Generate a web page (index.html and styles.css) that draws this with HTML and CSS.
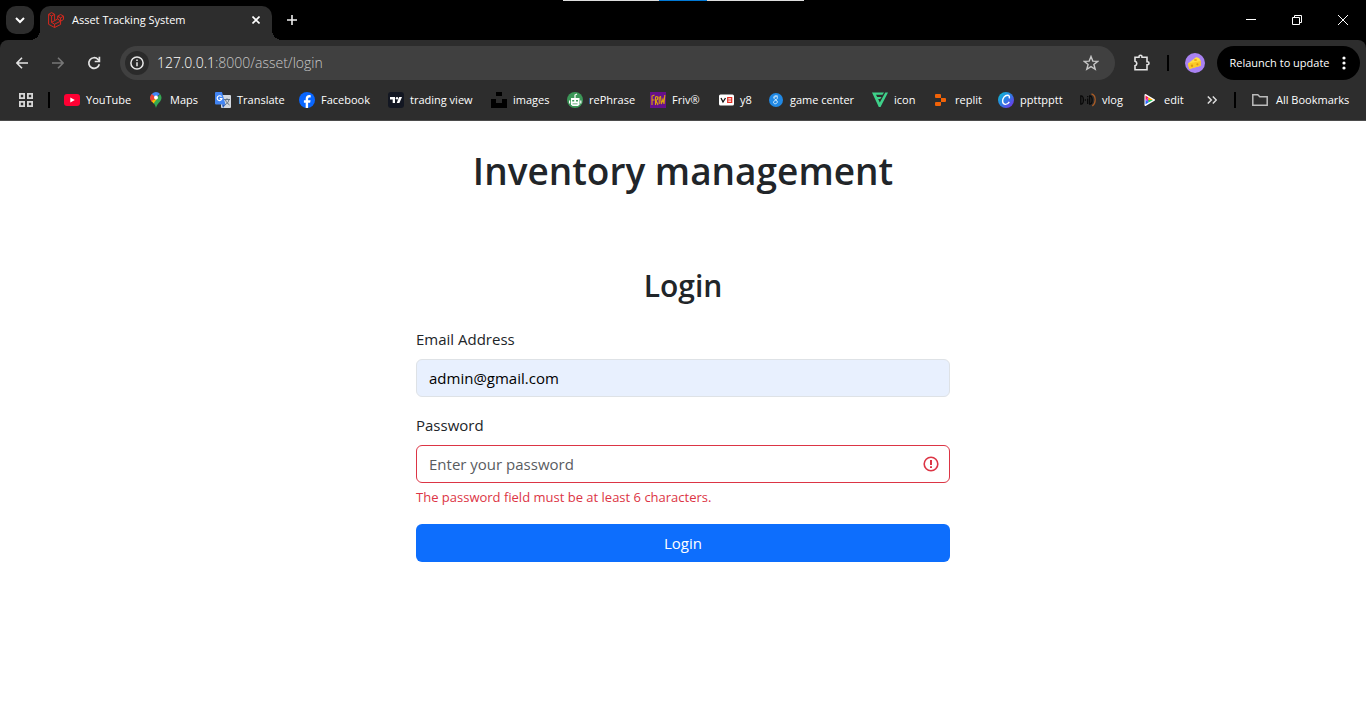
FILE: index.html
```html
<!DOCTYPE html>
<html lang="en">
<head>
<meta charset="utf-8">
<meta name="viewport" content="width=device-width, initial-scale=1">
<title>Asset Tracking System</title>
<link rel="stylesheet" href="styles.css">
</head>
<body>
<div class="browser">
  <div class="snap-bar"></div>
  <header class="tab-strip">
    <button class="tab-search" aria-label="Search tabs"><svg width="10" height="10" viewBox="0 0 10 10" fill="none" stroke="#fff" stroke-width="2"><path d="M1 3l4 4 4-4"/></svg></button>
    <div class="tab">
      <svg width="16" height="16" viewBox="0 0 16 16" fill="none" stroke="#d6281e" stroke-width="1"><path d="M.6 2.3l3-1.7 3 1.700v6.400l3.100-1.800V4.200l2.900-1.700 2.900 1.700v3.300l-2.900 1.700v3.300l-6 3-6-3.200z"/><path d="M.6 2.300l3 1.700 3-1.700M3.600 4v6.400l3-1.700M9.700 4.200l2.900 1.700 2.900-1.700M12.600 5.900v3.300L9.700 6.900M3.600 10.400l3 1.800 6-3M6.600 12.200v3.300"/></svg>
      <span class="tab-title">Asset Tracking System</span>
      <button class="tab-close" aria-label="Close tab"><svg width="8" height="8" viewBox="0 0 8 8" stroke="#fff" stroke-width="1.600"><path d="M.5.5l7 7M7.500.5l-7 7"/></svg></button>
    </div>
    <button class="new-tab" aria-label="New tab"><svg width="10" height="10" viewBox="0 0 10 10" stroke="#eee" stroke-width="1.600"><path d="M5 0v10M0 5h10"/></svg></button>
    <div class="window-controls">
      <button aria-label="Minimize"><svg width="10" height="10" viewBox="0 0 10 10" stroke="#fff"><path d="M0 4.500h10"/></svg></button>
      <button aria-label="Restore"><svg width="10" height="10" viewBox="0 0 10 10" fill="none" stroke="#fff"><path d="M.5 2.500h7v7h-7zM2.500 2.500v-2h7v7h-2"/></svg></button>
      <button aria-label="Close"><svg width="10" height="10" viewBox="0 0 10 10" stroke="#fff"><path d="M0 0l10 10M10 0L0 10"/></svg></button>
    </div>
  </header>

  <div class="toolbar">
    <div class="nav-buttons">
      <button aria-label="Back"><svg width="12" height="12" viewBox="0 0 12 12" fill="none" stroke="#e3e3e3" stroke-width="1.600"><path d="M12 6H1M6 .7L.9 6 6 11.300"/></svg></button>
      <button aria-label="Forward"><svg width="12" height="12" viewBox="0 0 12 12" fill="none" stroke="#777" stroke-width="1.600"><path d="M0 6h11M6 .7L11.100 6 6 11.300"/></svg></button>
      <button aria-label="Reload"><svg width="14" height="14" viewBox="0 0 14 14" fill="none" stroke="#e3e3e3" stroke-width="1.700"><path d="M12.300 8.200A5.300 5.300 0 1 1 11 3.400L12.500 5"/><path d="M12.400.8v4.700H7.700"/></svg></button>
    </div>
    <div class="address-bar">
      <button class="site-info" aria-label="View site information"><svg width="14" height="14" viewBox="0 0 14 14" fill="none" stroke="#e8e8e8" stroke-width="1.500"><circle cx="7" cy="7" r="6.100"/><path d="M7 6.200v4M7 3.600v1.500"/></svg></button>
      <input class="url-input" id="url" type="text" value="127.0.0.1:8000/asset/login" aria-label="Address">
      <div class="url" aria-hidden="true">127.0.0.1<span>:8000/asset/login</span></div>
      <button class="star" aria-label="Bookmark this page"><svg width="16" height="16" viewBox="0 0 16 16" fill="none" stroke="#c7c7c7" stroke-width="1.400"><path d="M8 1.500l1.800 4.600 5 .3-3.900 3.100 1.300 4.800L8 11.600l-4.200 2.700 1.300-4.800-3.900-3.100 5-.3z"/></svg></button>
    </div>
    <div class="toolbar-end">
      <button class="extensions" aria-label="Extensions"><svg width="18" height="18" viewBox="0 0 18 18" fill="none" stroke="#e3e3e3" stroke-width="1.600"><path d="M3 3.200h4V2.700a1.500 1.500 0 0 1 3 0v.5h5v4.500h.5a1.500 1.500 0 0 1 0 3H15v5H3v-4c2.400-.6 2.400-4 0-4.500z"/></svg></button>
      <span class="separator"></span>
      <button class="profile" aria-label="Profile"><svg width="20" height="20" viewBox="0 0 20 20"><circle cx="10" cy="10" r="10" fill="#a982f2"/><path d="M3 10.500l8-6.300c2.500.2 4.200 1.500 4.700 3.800v4.800L4.300 16z" fill="#ffdf45"/><path d="M3 10.500l12.700-2.500v4.800L4.300 16z" fill="#fbc926"/><circle cx="7" cy="12.800" r="1.200" fill="#dc9a12"/><circle cx="12.400" cy="11.300" r="1.100" fill="#dc9a12"/><ellipse cx="10.500" cy="7" rx="1.500" ry=".9" fill="#e9a514"/></svg></button>
      <button class="relaunch">Relaunch to update<svg width="4" height="14" viewBox="0 0 4 14" fill="#fff"><circle cx="2" cy="2" r="1.600"/><circle cx="2" cy="7" r="1.600"/><circle cx="2" cy="12" r="1.600"/></svg></button>
    </div>
  </div>

  <nav class="bookmarks" aria-label="Bookmarks">
    <button class="apps" aria-label="Apps"><svg width="14" height="14" viewBox="0 0 14 14" fill="none" stroke="#d6d6d6" stroke-width="1.800"><path d="M.9.9h4.200v4.200H.9zM8.900.9h4.200v4.200H8.900zM.9 8.900h4.200v4.200H.9zM8.900 8.900h4.200v4.200H8.900z"/></svg></button>
    <span class="separator"></span>
    <div class="bookmark-list">
      <a href="#"><svg class="icon" viewBox="0 0 16 16"><rect y="2" width="16" height="12" rx="3" fill="#ff0033"/><path d="M6.300 5.500v5L10.800 8z" fill="#fff"/></svg>YouTube</a>
      <a href="#"><svg class="icon" viewBox="0 0 16 16"><path d="M8 0a5.600 5.600 0 0 0-5.500 5.600c0 1.500.5 2.600 1.300 3.700L12 2A5.500 5.500 0 0 0 8 0z" fill="#4285f4"/><path d="M3.700 2.100L8 5.600 3.800 10a6 6 0 0 1-.1-7.900z" fill="#ea4335"/><path d="M12 2a5.500 5.500 0 0 1 1.500 3.600c0 4.400-4.200 5.400-5.500 10.400-.6-2.600-1.700-4-2.800-5.200z" fill="#34a853"/><path d="M3.600 9l6.200-3.400L5.600 11.400z" fill="#fbbc04"/><circle cx="8" cy="5.600" r="2" fill="#fff"/></svg>Maps</a>
      <a href="#"><svg class="icon" viewBox="0 0 16 16"><rect x="6" y="3" width="10" height="13" rx="1" fill="#d3d8df"/><path d="M9 7.500h6M12 6.300v1.200M14 7.500c-.4 2.500-2 4-4 5.500M10.500 8c.8 2 2 3.600 4 5" fill="none" stroke="#607080"/><path d="M1 0h6l3.500 12.500H1a1 1 0 0 1-1-1V1a1 1 0 0 1 1-1z" fill="#4285f4"/><path d="M8 16l-1-3.500h3.500z" fill="#2458b8"/><path d="M6.500 4.700a2.400 2.400 0 1 0 .4 2H4.700" fill="none" stroke="#fff" stroke-width="1.200"/></svg>Translate</a>
      <a href="#"><svg class="icon" viewBox="0 0 16 16"><circle cx="8" cy="8" r="8" fill="#0866ff"/><path d="M6.700 16v-5.300H4.900V8.200h1.800V7c0-2.800 1.300-4 3.700-4 .5 0 1 .1 1.300.2v2.200h-1c-1.200 0-1.600.5-1.600 1.600v1.200h2.500l-.5 2.500h-2V16z" fill="#fff"/></svg>Facebook</a>
      <a href="#"><svg class="icon" viewBox="0 0 16 16"><rect width="16" height="16" rx="3" fill="#131722"/><path d="M2 5h5v6H4.700V7.500H2zM11.200 5H14l-2.600 6H8.700z" fill="#fff"/><circle cx="9" cy="6.200" r="1.200" fill="#fff"/></svg>trading view</a>
      <a href="#"><svg class="icon" viewBox="0 0 16 16"><path d="M5 0h6v4H5zM0 7h5v4h6V7h5v9H0z" fill="#000"/></svg>images</a>
      <a href="#"><svg class="icon" viewBox="0 0 16 16"><circle cx="8" cy="8" r="8" fill="#3c9758"/><path d="M4 6h8.500v6.500L11 14H5.500L4 12.500z" fill="#fff"/><path d="M8 6V3l2-1" fill="none" stroke="#fff" stroke-width="1.200"/><path d="M2 8.500h1.200v3H2zM13.200 8.500h1.200v3h-1.200z" fill="#fff"/><path d="M5.200 8h2v1.500h-2zM9 8h2v1.500H9zM5.500 11.500h5v.8h-5z" fill="#3c9758"/></svg>rePhrase</a>
      <a href="#"><svg class="icon" viewBox="0 0 16 16"><path fill="#66108b" d="M0 0h16v16H0z"/><path d="M2 13V4l2.500-1M2 8h2.500M5.500 13V5c3-1.500 3 2.500.5 3.500L8 13M9.200 4.500V12M10.500 4l.8 8 1.700-5 1 5 .8-9" fill="none" stroke="#dba50c" stroke-width="1.100"/></svg>Friv®</a>
      <a href="#"><svg class="icon" viewBox="0 0 16 16"><rect x="1" y="2.500" width="15" height="11" rx="1.500" fill="#fff"/><path d="M3 6l2 4 2.500-4" fill="none" stroke="#111" stroke-width="1.300"/><path d="M9.700 5.700h4v4.600h-4zM9.700 8h4" fill="none" stroke="#e52b20" stroke-width="1.200"/></svg>y8</a>
      <a href="#"><svg class="icon" viewBox="0 0 16 16"><circle cx="8" cy="8" r="7" fill="#2089e5"/><path d="M10 4.300C7 2.800 5 4.600 6 6.300S9.500 8 9.300 10 6 12.400 5.500 10.600 8.500 8.300 9.300 6.400 7.500 4 6.300 5.500" fill="none" stroke="#d8efff"/></svg>game center</a>
      <a href="#"><svg class="icon" viewBox="0 0 16 16" fill="#3fd18a"><path d="M0 .5h12l-1.500 2.200H4L5.200 5H9.500L8.200 7H6.200l1.600 3.500L13.300.5H16L8.500 15H6.800z"/></svg>icon</a>
      <a href="#"><svg class="icon" viewBox="0 0 16 16" fill="#f26207"><path d="M3 2h4a1 1 0 0 1 1 1v3H3a1 1 0 0 1-1-1V3a1 1 0 0 1 1-1zM8 6h4a1 1 0 0 1 1 1v2a1 1 0 0 1-1 1H8zM3 10h5v3a1 1 0 0 1-1 1H3a1 1 0 0 1-1-1v-2a1 1 0 0 1 1-1z"/></svg>replit</a>
      <a href="#"><svg class="icon" viewBox="0 0 16 16"><defs><linearGradient id="canva" x1="0" y1="0" x2="1" y2="1"><stop stop-color="#08c5ce"/><stop offset=".5" stop-color="#2f7be4"/><stop offset="1" stop-color="#8025ec"/></linearGradient></defs><circle cx="8" cy="8" r="8" fill="url(#canva)"/><path d="M11 6.400c1-1.600.2-3.200-1.500-3.200-2.800 0-4.900 3-4.900 5.900 0 4 4.400 4.500 6.700.8" fill="none" stroke="#fff" stroke-width="1.400"/></svg>ppttpptt</a>
      <a href="#"><svg class="icon" viewBox="0 0 16 16" fill="none" stroke="#090909" stroke-width="1.300"><path d="M.8 4v8h.7c2.500 0 2.500-8 0-8zM4.800 8H6M7.700 6.500V12M7.700 4v1.200M9.700 4v8h.4c2.700 0 2.700-8 0-8z"/><path d="M11.500 2c4.500 1 5 9 .8 12" stroke="#a85b26"/></svg>vlog</a>
      <a href="#"><svg class="icon" viewBox="0 0 16 16"><path d="M3.500 3L12 8 3.500 13z" fill="#fff" stroke="#fff" stroke-width="2" stroke-linejoin="round"/><path d="M3.500 3.500V8l3-2.400z" fill="#ff1744"/><path d="M3.500 8v4.500L7 10z" fill="#246cff"/><path d="M6.500 5.600L3.500 8 7 10z" fill="#c624e8"/><path d="M6.500 5.300L11 8H6z" fill="#ffab00"/><path d="M6 8h5l-4.300 2.500z" fill="#21ce5c"/></svg>edit</a>
    </div>
    <button class="more" aria-label="More bookmarks"><svg width="10" height="8" viewBox="0 0 10 8" fill="none" stroke="#ddd" stroke-width="1.500"><path d="M.8.5L4.300 4 .8 7.500M5.800.5L9.300 4 5.800 7.500"/></svg></button>
    <span class="separator"></span>
    <a class="all-bookmarks" href="#"><svg class="icon" viewBox="0 0 16 16" fill="none" stroke="#bbb" stroke-width="1.500"><path d="M.8 13V2.800h5l2 2h7.400V13.200H.8z"/></svg>All Bookmarks</a>
  </nav>
</div>

<main class="page">
  <h1>Inventory management</h1>
  <form class="login" novalidate>
    <h2>Login</h2>
    <div class="field">
      <label for="email">Email Address</label>
      <input class="autofilled" id="email" type="email" value="admin@gmail.com">
    </div>
    <div class="field">
      <label for="password">Password</label>
      <div class="input-wrap">
        <input class="invalid" id="password" type="password" placeholder="Enter your password" aria-describedby="password-error">
        <svg class="error-icon" width="16" height="16" viewBox="0 0 16 16" fill="none" stroke="#dc3545" stroke-width="1.600"><circle cx="8" cy="8" r="6.800"/><path d="M8 4v5" stroke-width="2"/><path d="M8 10.300v1.700" stroke-width="2"/></svg>
      </div>
      <p class="error" id="password-error">The password field must be at least 6 characters.</p>
    </div>
    <button class="submit" type="button">Login</button>
  </form>
</main>
</body>
</html>
```

FILE: styles.css
```css
* {
  box-sizing: border-box;
}

body {
  margin: 0;
  background: #fff;
  color: #212529;
  font: 15px/24px "Open Sans", "Noto Sans", sans-serif;
}

button,
input {
  margin: 0;
  padding: 0;
  border: 0;
  background: none;
  color: inherit;
  font: inherit;
}

button {
  display: flex;
  align-items: center;
  justify-content: center;
}

a {
  color: inherit;
  text-decoration: none;
}

svg {
  display: block;
  flex: none;
}

/* Browser chrome */
.browser {
  position: relative;
  background: #000;
  color: #fff;
  font-size: 11px;
  line-height: 16px;
  white-space: nowrap;
}

.snap-bar {
  position: absolute;
  top: 0;
  left: 50%;
  width: 241px;
  height: 1px;
  margin-left: -120px;
  background: linear-gradient(90deg, #ddd 96px, #0078d4 96px 144px, #ddd 144px);
}

.tab-strip {
  display: flex;
  align-items: center;
  height: 40px;
  padding-left: 6px;
}

.tab-search {
  width: 28px;
  height: 28px;
  border-radius: 10px;
  background: #2d2d2d;
}

.tab {
  position: relative;
  display: flex;
  align-items: center;
  align-self: flex-end;
  gap: 8px;
  width: 232px;
  height: 34px;
  margin-left: 6px;
  padding: 0 8px 6px;
  border-radius: 10px 10px 0 0;
  background: #2d2d2d;
}

.tab::before,
.tab::after {
  content: "";
  position: absolute;
  bottom: 0;
  width: 10px;
  height: 10px;
}

.tab::before {
  right: 100%;
  background: radial-gradient(circle at 0 0, transparent 10px, #2d2d2d 10px);
}

.tab::after {
  left: 100%;
  background: radial-gradient(circle at 100% 0, transparent 10px, #2d2d2d 10px);
}

.tab-title {
  flex: 1;
}

.tab-close {
  width: 16px;
  height: 16px;
}

.new-tab {
  width: 28px;
  height: 28px;
  margin-left: 6px;
}

.window-controls {
  display: flex;
  margin-left: auto;
}

.window-controls button {
  width: 46px;
  height: 40px;
}

.toolbar {
  display: flex;
  align-items: center;
  height: 46px;
  padding: 0 6px 0 4px;
  border-radius: 8px 8px 0 0;
  background: #2d2d2d;
}

.nav-buttons {
  display: flex;
}

.nav-buttons button {
  width: 36px;
  height: 34px;
}

.address-bar {
  position: relative;
  display: flex;
  flex: 1;
  align-items: center;
  height: 34px;
  margin-left: 8px;
  padding: 0 14px 0 5px;
  border-radius: 17px;
  background: #404040;
}

.site-info {
  width: 24px;
  height: 24px;
  border-radius: 12px;
  background: #2a2a2a;
}

.url-input {
  flex: 1;
  align-self: stretch;
  color: transparent;
  font-size: 14px;
  font-weight: 300;
}

.url {
  position: absolute;
  left: 37px;
  font-size: 14px;
  font-weight: 300;
  pointer-events: none;
}

.url span {
  color: #c8c8c8;
}

.star {
  width: 20px;
  height: 24px;
}

.toolbar-end {
  display: flex;
  align-items: center;
  margin-left: 16px;
}

.extensions {
  width: 20px;
  height: 28px;
}

.toolbar-end .separator {
  margin: 0 16px;
}

.separator {
  flex: none;
  width: 2px;
  height: 16px;
  background: #000;
}

.relaunch {
  gap: 12px;
  width: 143px;
  height: 34px;
  margin-left: 12px;
  padding-right: 2px;
  border-radius: 17px;
  background: #000;
}

.bookmarks {
  display: flex;
  align-items: center;
  height: 35px;
  padding: 0 14px 6px 18px;
  border-bottom: 1px solid #4b4b4b;
  background: #2d2d2d;
}

.apps {
  width: 16px;
  height: 16px;
}

.apps + .separator {
  margin: 0 14px;
}

.bookmark-list {
  display: grid;
  grid-template-columns: 84px 67px 84px 89px 103px 76px 83px 68px 50px 104px 61px 65px 82px 62px 42px;
}

.bookmark-list a,
.all-bookmarks {
  display: flex;
  align-items: center;
  gap: 6px;
}

.icon {
  width: 16px;
  height: 16px;
}

.more {
  width: 16px;
  height: 16px;
  margin-left: 20px;
}

.more + .separator {
  margin: 0 16px 0 14px;
}

.all-bookmarks {
  gap: 8px;
}

/* Login page */
.page {
  padding: 26px 16px;
}

h1,
h2 {
  margin: 0;
  font-weight: 600;
  text-align: center;
}

h1 {
  margin-bottom: 72px;
  font-size: 37px;
  line-height: 48px;
}

h2 {
  margin-bottom: 22px;
  font-size: 30px;
  line-height: 38px;
}

.login {
  max-width: 534px;
  margin: 0 auto;
}

.field {
  margin-bottom: 16px;
}

.field label {
  display: block;
  margin-bottom: 8px;
}

.field input {
  display: block;
  width: 100%;
  height: 38px;
  padding: 0 12px;
  border: 1px solid #dee2e6;
  border-radius: 6px;
}

.field .autofilled {
  background: #e8f0fe;
  color: #000;
}

.input-wrap {
  position: relative;
}

.field .invalid {
  padding-right: 36px;
  border-color: #dc3545;
}

.invalid::placeholder {
  color: #595c5f;
  opacity: 1;
}

.error-icon {
  position: absolute;
  top: 11px;
  right: 11px;
}

.error {
  margin: 4px 0 0;
  color: #dc3545;
  font-size: 13px;
  line-height: 21px;
}

.submit {
  width: 100%;
  height: 38px;
  border-radius: 6px;
  background: #0d6efd;
  color: #fff;
}
```
